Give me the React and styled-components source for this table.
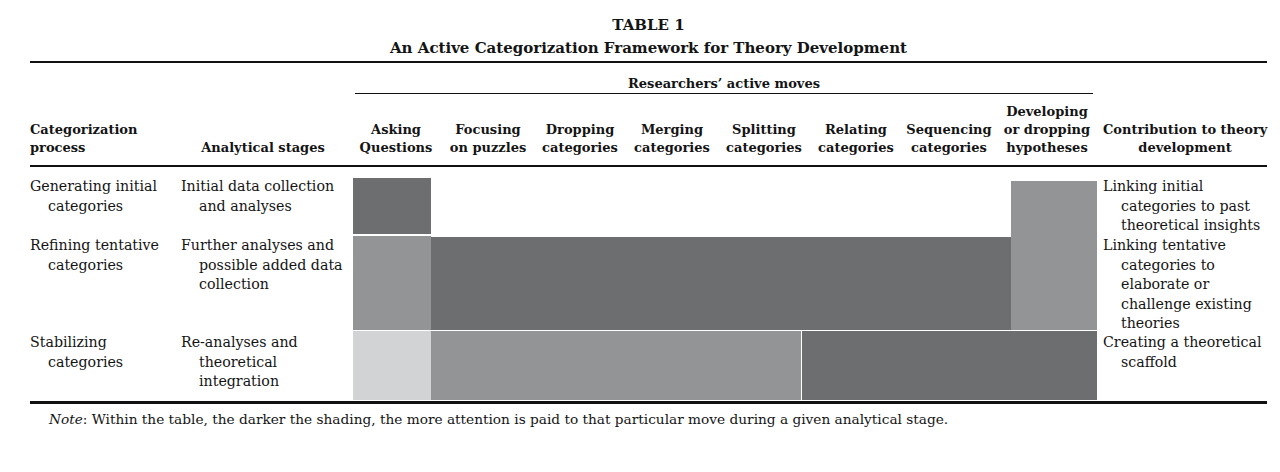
import React from "react";
import styled, { createGlobalStyle } from "styled-components";

const GlobalStyle = createGlobalStyle`
	html, body {
		margin: 0;
		padding: 0;
		background: #ffffff;
	}
	body {
		font-family: "DejaVu Serif", "Liberation Serif", serif;
		color: #141414;
	}
`;

const tones = {
	dark: "#6d6e70",
	medium: "#939496",
	light: "#d2d3d5",
};

const Page = styled.div`
	width: 1237px;
	margin-left: 30px;
	padding-top: 14px;
`;

const Caption = styled.div`
	text-align: center;
	font-weight: bold;
	font-size: 15px;
	line-height: 23px;
	white-space: nowrap;
`;

const Rule = styled.div`
	border-top: ${props => props.$weight || 2}px solid #111;
	margin-top: ${props => props.$gap || 0}px;
`;

const Head = styled.div`
	display: grid;
	grid-template-columns: 146px 174px repeat(6, 92px) 94px 102px 169px;
	grid-template-rows: auto auto;
	padding: 11px 0 8px;
	font-weight: bold;
	font-size: 13px;
	line-height: 18px;
	white-space: nowrap;
`;

const Spanner = styled.div`
	grid-row: 1;
	grid-column: 3 / 11;
	margin: 0 5px;
	text-align: center;
	line-height: 19px;
	border-bottom: 1px solid #111;
`;

const HeadCell = styled.div`
	grid-row: 2;
	align-self: end;
	margin-top: 9px;
	text-align: ${props => props.$align || "center"};
	padding-left: ${props => props.$pad || 0}px;
`;

const Body = styled.div`
	display: grid;
	grid-template-columns: 146px 177px 78px 92px 93px 92px 93px 105px 105px 86px 170px;
	grid-template-rows: 59px 95px 69px;
	padding-top: 10px;
	font-size: 14.2px;
	line-height: 19.5px;
	white-space: nowrap;
`;

const TextCell = styled.div`
	grid-row: ${props => props.$row};
	grid-column: ${props => props.$col};
	padding-top: ${props => props.$top || 0}px;
	padding-left: ${props => props.$pad + 18}px;
	text-indent: -18px;
`;

const Shade = styled.div`
	grid-row: ${props => props.$rows};
	grid-column: ${props => props.$cols};
	margin: ${props => props.$inset || "0"};
	background: ${props => tones[props.$tone]};
`;

const Note = styled.p`
	margin: 6px 0 0;
	padding-left: 19px;
	font-size: 13.7px;
	line-height: 19.5px;
	white-space: nowrap;
	em {
		font-style: italic;
	}
`;

const moves = [
	["Asking", "Questions"],
	["Focusing", "on puzzles"],
	["Dropping", "categories"],
	["Merging", "categories"],
	["Splitting", "categories"],
	["Relating", "categories"],
	["Sequencing", "categories"],
	["Developing", "or dropping", "hypotheses"],
];

const rows = [
	{
		process: ["Generating initial", "categories"],
		stage: ["Initial data collection", "and analyses"],
		contribution: ["Linking initial", "categories to past", "theoretical insights"],
	},
	{
		process: ["Refining tentative", "categories"],
		stage: ["Further analyses and", "possible added data", "collection"],
		contribution: ["Linking tentative", "categories to", "elaborate or", "challenge existing", "theories"],
	},
	{
		process: ["Stabilizing", "categories"],
		stage: ["Re-analyses and", "theoretical", "integration"],
		contribution: ["Creating a theoretical", "scaffold"],
	},
];

// darker shading = more attention paid to that move in the stage
const shades = [
	{ rows: "1", cols: "3 / 4", tone: "dark", inset: "1px 0 2px 0" },
	{ rows: "1 / 3", cols: "10 / 11", tone: "medium", inset: "4px 0 1px 0" },
	{ rows: "2", cols: "3 / 4", tone: "medium", inset: "0 0 1px 0" },
	{ rows: "2", cols: "4 / 10", tone: "dark", inset: "1px 0 1px 0" },
	{ rows: "3", cols: "3 / 4", tone: "light" },
	{ rows: "3", cols: "4 / 8", tone: "medium" },
	{ rows: "3", cols: "8 / 11", tone: "dark", inset: "0 0 0 1px" },
];

const Lines = ({ items }) =>
	items.map((line, i) => (
		<React.Fragment key={i}>
			{i > 0 && <br />}
			{line}
		</React.Fragment>
	));

const App = () => {
	return (
		<React.Fragment>
			<GlobalStyle />
			<Page>
				<Caption>TABLE 1</Caption>
				<Caption>An Active Categorization Framework for Theory Development</Caption>
				<Rule $gap={1} />

				<Head>
					<Spanner>Researchers’ active moves</Spanner>
					<HeadCell $align="left">
						<Lines items={["Categorization", "process"]} />
					</HeadCell>
					<HeadCell>Analytical stages</HeadCell>
					{moves.map((move, i) => (
						<HeadCell key={i}>
							<Lines items={move} />
						</HeadCell>
					))}
					<HeadCell $pad={5}>
						<Lines items={["Contribution to theory", "development"]} />
					</HeadCell>
				</Head>
				<Rule />

				<Body>
					{rows.map((row, i) => (
						<React.Fragment key={i}>
							<TextCell $row={i + 1} $col={1} $pad={0} $top={i === 2 ? 2 : 0}>
								<Lines items={row.process} />
							</TextCell>
							<TextCell $row={i + 1} $col={2} $pad={5} $top={i === 2 ? 2 : 0}>
								<Lines items={row.stage} />
							</TextCell>
							<TextCell $row={i + 1} $col={11} $pad={6} $top={i === 2 ? 2 : 0}>
								<Lines items={row.contribution} />
							</TextCell>
						</React.Fragment>
					))}
					{shades.map((s, i) => (
						<Shade key={i} $rows={s.rows} $cols={s.cols} $tone={s.tone} $inset={s.inset} />
					))}
				</Body>
				<Rule $weight={3} $gap={1} />

				<Note>
					<em>Note</em>: Within the table, the darker the shading, the more attention is paid to that particular move during a given analytical stage.
				</Note>
			</Page>
		</React.Fragment>
	);
};

export default App;
